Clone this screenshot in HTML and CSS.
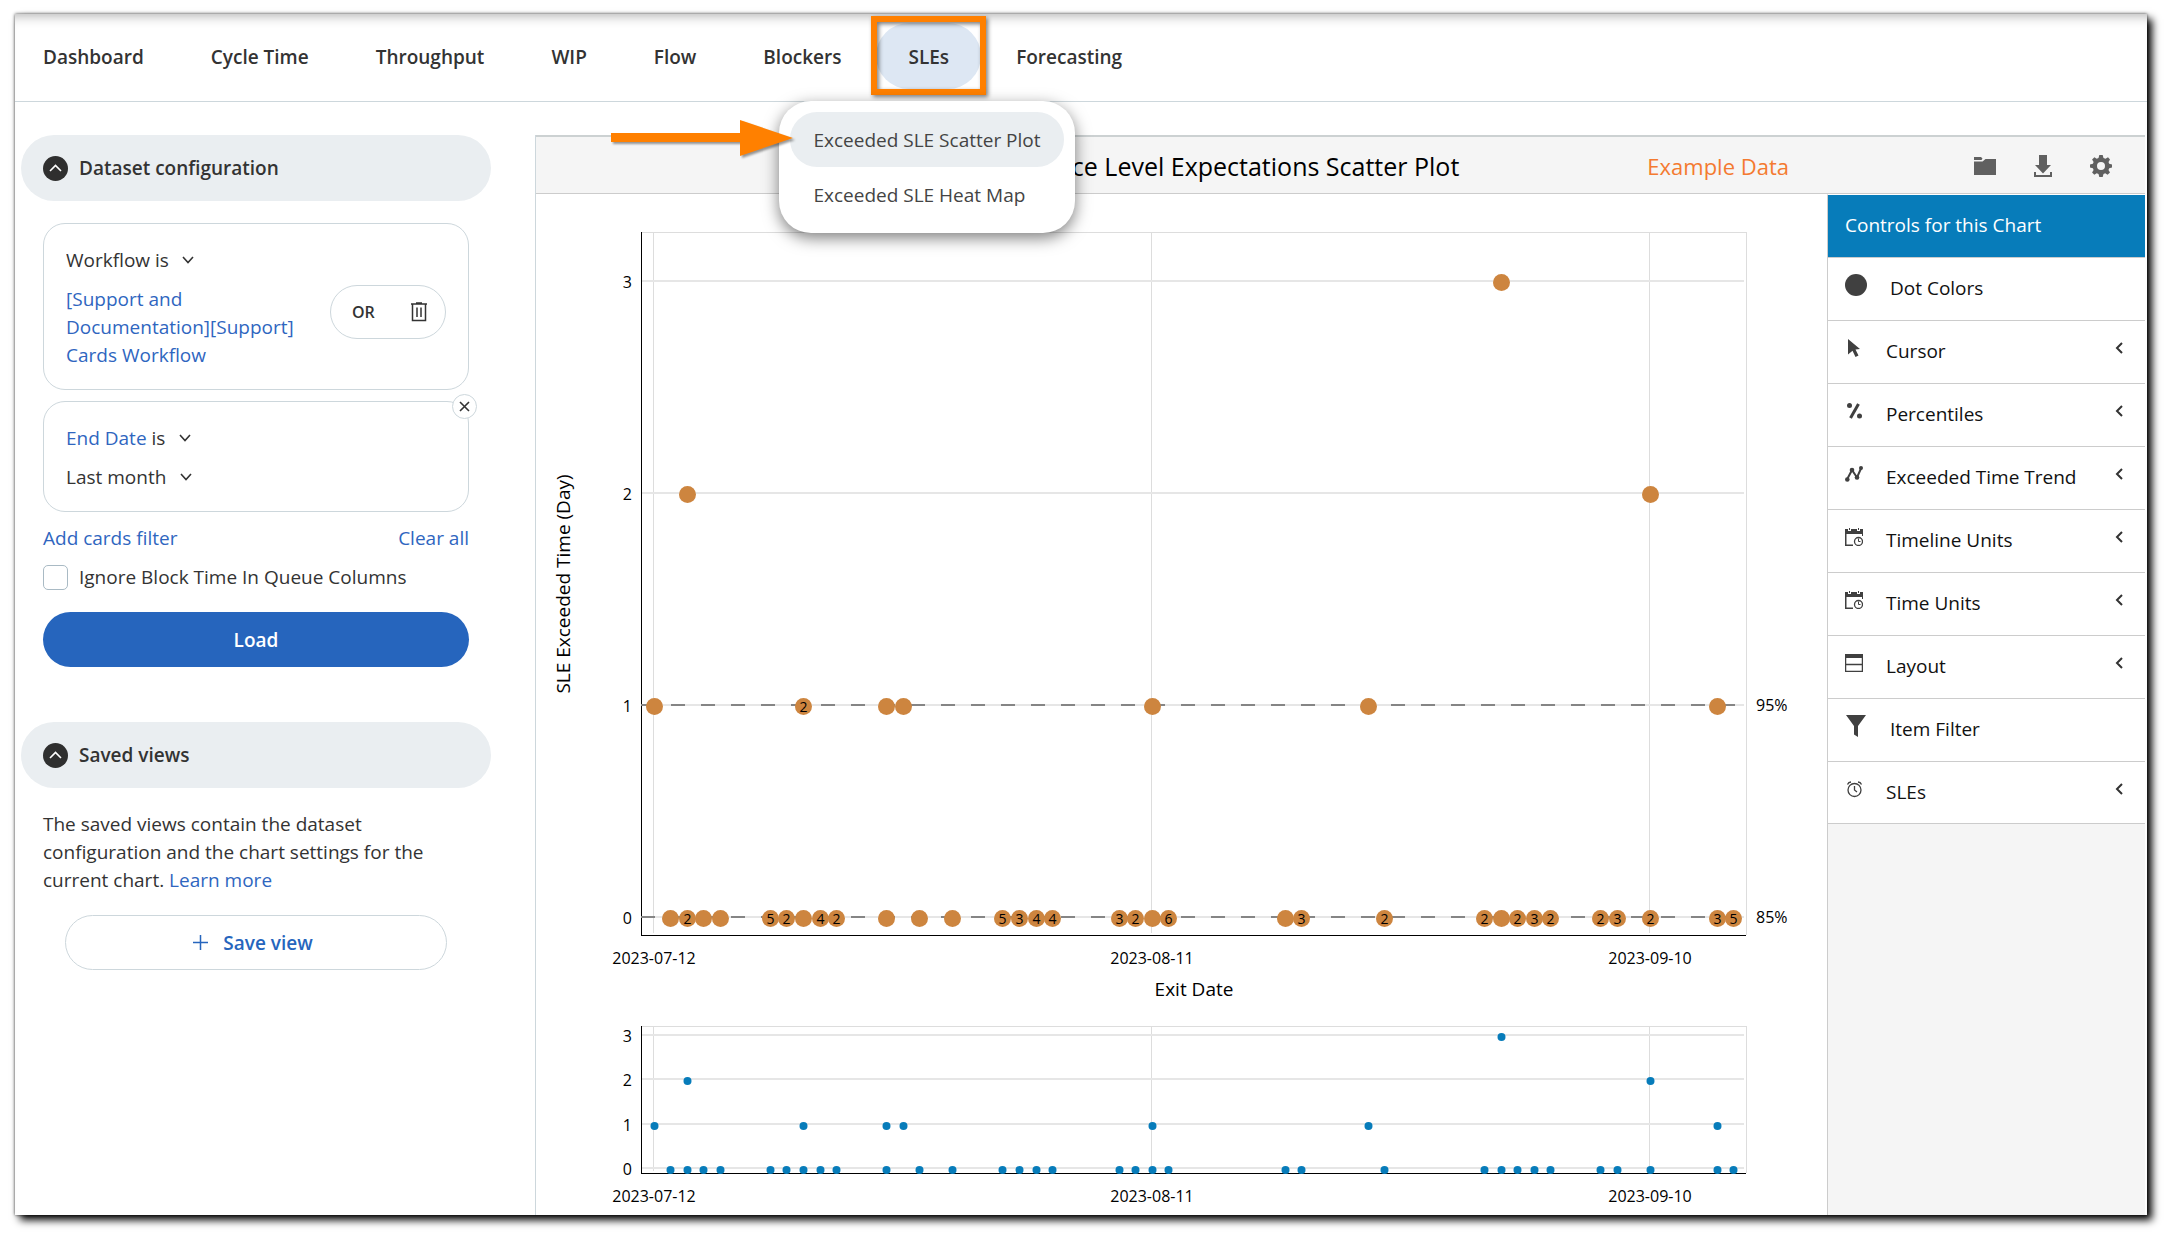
FILE: index.html
```
<!doctype html>
<html lang="en">
    <head>
        <meta charset="utf-8">
        <title>SLEs - Exceeded SLE Scatter Plot</title>
        <link rel="stylesheet" href="styles.css">
    </head>
    <body>
        <div class="frame">
            <nav class="topnav">
                <ul class="tabs">
                    <li><a class="tab" href="#">Dashboard</a></li>
                    <li><a class="tab" href="#">Cycle Time</a></li>
                    <li><a class="tab" href="#">Throughput</a></li>
                    <li><a class="tab" href="#">WIP</a></li>
                    <li><a class="tab" href="#">Flow</a></li>
                    <li><a class="tab" href="#">Blockers</a></li>
                    <li class="open">
                        <a class="tab active" href="#">SLEs</a>
                        <div class="highlight"></div>
                        <div class="menu">
                            <a class="menu-item current" href="#">Exceeded SLE Scatter Plot</a>
                            <a class="menu-item" href="#">Exceeded SLE Heat Map</a>
                        </div>
                        <svg class="arrow" width="182" height="36" viewBox="0 0 182 36"><path d="M0 13H129V0L182 18L129 36V22H0Z" fill="#ff8000"/></svg>
                    </li>
                    <li><a class="tab" href="#">Forecasting</a></li>
                </ul>
            </nav>

            <div class="page">
                <aside class="sidebar">
                    <button class="section-title" type="button">
                        <svg width="25" height="25" viewBox="0 0 25 25"><circle cx="12.5" cy="12.5" r="12.5" fill="#2f2f2f"/><path d="M7 15L12.500 9.500L18 15" fill="none" stroke="#fff" stroke-width="1.600"/></svg>
                        Dataset configuration
                    </button>
                    <div class="section">
                        <div class="card">
                            <div class="pick">
                                <select aria-label="Workflow condition"><option>Workflow is</option></select>
                                <svg class="chev" width="12" height="8" viewBox="0 0 12 8"><path d="M1 1L6 6.500L11 1"/></svg>
                            </div>
                            <div class="workflow">
                                <a href="#">[Support and Documentation][Support] Cards Workflow</a>
                                <div class="or-box">
                                    <button class="or" type="button">OR</button>
                                    <button class="trash" type="button" aria-label="Remove workflow">
                                        <svg width="16" height="20" viewBox="0 0 16 20" fill="none" stroke="#333" stroke-width="1.500"><path d="M0 2H16M5 1H11M1.500 2V18.500H14.500V2M6 5.500V15M10 5.500V15"/></svg>
                                    </button>
                                </div>
                            </div>
                        </div>
                        <div class="card">
                            <button class="close" type="button" aria-label="Remove end date">
                                <svg width="11" height="11" viewBox="0 0 11 11"><path d="M1 1L10 10M10 1L1 10" stroke="#333" stroke-width="1.600"/></svg>
                            </button>
                            <div class="pick">
                                <a href="#">End Date</a>
                                <select aria-label="End date condition"><option>is</option></select>
                                <svg class="chev" width="12" height="8" viewBox="0 0 12 8"><path d="M1 1L6 6.500L11 1"/></svg>
                            </div>
                            <div class="pick">
                                <select aria-label="Period"><option>Last month</option></select>
                                <svg class="chev" width="12" height="8" viewBox="0 0 12 8"><path d="M1 1L6 6.500L11 1"/></svg>
                            </div>
                        </div>
                        <div class="links">
                            <a href="#">Add cards filter</a>
                            <a href="#">Clear all</a>
                        </div>
                        <label class="check"><input type="checkbox">Ignore Block Time In Queue Columns</label>
                        <button class="load" type="button">Load</button>
                    </div>

                    <button class="section-title second" type="button">
                        <svg width="25" height="25" viewBox="0 0 25 25"><circle cx="12.5" cy="12.5" r="12.5" fill="#2f2f2f"/><path d="M7 15L12.500 9.500L18 15" fill="none" stroke="#fff" stroke-width="1.600"/></svg>
                        Saved views
                    </button>
                    <div class="section">
                        <p class="note">The saved views contain the dataset configuration and the chart settings for the current chart. <a href="#">Learn more</a></p>
                        <button class="save" type="button">
                            <svg width="15" height="15" viewBox="0 0 15 15"><path d="M7.500 0V15M0 7.500H15" stroke="#2665bd" stroke-width="1.500"/></svg>
                            Save view
                        </button>
                    </div>
                </aside>

                <main class="chart">
                    <header class="chart-head">
                        <h1>Service Level Expectations Scatter Plot</h1>
                        <span class="example">Example Data</span>
                        <div class="tools">
                            <button type="button" aria-label="Open">
                                <svg width="22" height="20" viewBox="0 0 22 20" fill="#606060"><path d="M0 1H7L8.500 2.500L7.500 4H0ZM0 5.500H8.500L11.500 3H22V19H0Z"/></svg>
                            </button>
                            <button type="button" aria-label="Download">
                                <svg width="18" height="22" viewBox="0 0 18 22" fill="#606060"><path d="M5 0H13V10H17L9 18.500L1 10H5ZM0 17H2V20H16V17H18V22H0Z"/></svg>
                            </button>
                            <button type="button" aria-label="Settings">
                                <svg width="22" height="22" viewBox="0 0 22 22"><path d="M9.300 0H12.700L13.500 3L15.500 3.800L18 2.300L20 4.600L18.500 7L19.200 8.800L22 9.400V12.600L19.200 13.300L18.500 15L20 17.500L17.600 19.800L15.200 18.300L13.500 19L12.700 22H9.300L8.500 19L6.700 18.300L4.300 19.800L2.100 17.500L3.600 15L2.900 13.300L0 12.600V9.400L2.900 8.800L3.600 7L2.100 4.600L4.400 2.300L6.700 3.800L8.500 3ZM11 7A4 4 0 1 0 11 15A4 4 0 1 0 11 7Z" fill="#606060" fill-rule="evenodd"/></svg>
                            </button>
                        </div>
                    </header>
                    <div class="chart-body">
                        <div class="plots">
                            <svg class="plot" id="main-plot" viewBox="0 0 1291 812"></svg>
                            <svg class="plot" id="mini-plot" viewBox="0 0 1291 202"></svg>
                        </div>
                        <div class="controls">
                            <h2>Controls for this Chart</h2>
                            <button class="control" type="button">
                                <svg width="22" height="22" viewBox="0 0 22 22"><circle cx="11" cy="11" r="11" fill="#404040"/></svg>
                                <span>Dot Colors</span>
                            </button>
                            <button class="control" type="button">
                                <svg width="18" height="18" viewBox="0 0 18 18"><path d="M3 0L15 10L10.500 10.500L13.500 16.500L10.500 18L7.500 11.800L3 15.500Z" fill="#404040"/></svg>
                                <span>Cursor</span>
                                <svg class="more" width="8" height="12" viewBox="0 0 8 12"><path d="M7 1L2 6L7 11"/></svg>
                            </button>
                            <button class="control" type="button">
                                <svg width="18" height="18" viewBox="0 0 18 18"><path d="M13.500 2L5.500 16" stroke="#404040" stroke-width="3"/><circle cx="4.500" cy="3.500" r="2.500" fill="#404040"/><circle cx="14.500" cy="14" r="2.500" fill="#404040"/></svg>
                                <span>Percentiles</span>
                                <svg class="more" width="8" height="12" viewBox="0 0 8 12"><path d="M7 1L2 6L7 11"/></svg>
                            </button>
                            <button class="control" type="button">
                                <svg width="18" height="18" viewBox="0 0 18 18" fill="#404040"><path d="M2 14.500L7 5L12 12.500L16 3.500" fill="none" stroke="#404040" stroke-width="2"/><circle cx="2.300" cy="14.500" r="2.300"/><circle cx="7" cy="5" r="2.300"/><circle cx="12" cy="12.500" r="2.300"/><circle cx="16" cy="3" r="2"/></svg>
                                <span>Exceeded Time Trend</span>
                                <svg class="more" width="8" height="12" viewBox="0 0 8 12"><path d="M7 1L2 6L7 11"/></svg>
                            </button>
                            <button class="control" type="button">
                                <svg width="18" height="18" viewBox="0 0 18 18"><path d="M0 1H3V3H6V1H12V3H15V1H18V8H17V6H1.500V16.500H8V18H0Z" fill="#404040"/><path d="M4.500 0V2M13.500 0V2M13.500 10.500V13.500H15.500" stroke="#404040" fill="none"/><circle cx="13.500" cy="13.500" r="4" fill="none" stroke="#404040" stroke-width="1.300"/></svg>
                                <span>Timeline Units</span>
                                <svg class="more" width="8" height="12" viewBox="0 0 8 12"><path d="M7 1L2 6L7 11"/></svg>
                            </button>
                            <button class="control" type="button">
                                <svg width="18" height="18" viewBox="0 0 18 18"><path d="M0 1H3V3H6V1H12V3H15V1H18V8H17V6H1.500V16.500H8V18H0Z" fill="#404040"/><path d="M4.500 0V2M13.500 0V2M13.500 10.500V13.500H15.500" stroke="#404040" fill="none"/><circle cx="13.500" cy="13.500" r="4" fill="none" stroke="#404040" stroke-width="1.300"/></svg>
                                <span>Time Units</span>
                                <svg class="more" width="8" height="12" viewBox="0 0 8 12"><path d="M7 1L2 6L7 11"/></svg>
                            </button>
                            <button class="control" type="button">
                                <svg width="18" height="18" viewBox="0 0 18 18"><path d="M0 0H18V4H0Z" fill="#404040"/><path d="M.600 3V17.400H17.400V3M0 10.500H18" fill="none" stroke="#404040" stroke-width="1.300"/></svg>
                                <span>Layout</span>
                                <svg class="more" width="8" height="12" viewBox="0 0 8 12"><path d="M7 1L2 6L7 11"/></svg>
                            </button>
                            <button class="control" type="button">
                                <svg width="22" height="22" viewBox="0 0 22 22"><path d="M1 0H21L13 11V22L9 19.500V11Z" fill="#404040"/></svg>
                                <span>Item Filter</span>
                            </button>
                            <button class="control" type="button">
                                <svg width="18" height="18" viewBox="0 0 18 18" fill="none" stroke="#404040" stroke-width="1.300"><circle cx="9.500" cy="10" r="6.500"/><path d="M9.500 6V10L12 12M2.500 4.500A4 4 0 0 1 6 2M13 2A4 4 0 0 1 16.500 4.500"/></svg>
                                <span>SLEs</span>
                                <svg class="more" width="8" height="12" viewBox="0 0 8 12"><path d="M7 1L2 6L7 11"/></svg>
                            </button>
                        </div>
                    </div>
                </main>
            </div>
        </div>
        <script src="chart.js"></script>
    </body>
</html>
```
FILE: styles.css
```
* {
    box-sizing: border-box;
}
body {
    margin: 0;
    padding: 14px 27px 27px 15px;
    min-height: 100vh;
    display: flex;
    background: #fff;
    color: #333;
    font: 19px/28px "Open Sans", sans-serif;
}
a {
    color: #2f66bf;
    text-decoration: none;
}
button, select {
    margin: 0;
    padding: 0;
    border: 0;
    background: none;
    color: inherit;
    font: inherit;
}
svg {
    display: block;
    flex: none;
}
.frame {
    flex: 1;
    display: flex;
    flex-direction: column;
    background: #fff;
    box-shadow: inset 0 12px 12px -10px rgba(0, 0, 0, .3), 0 0 3px rgba(0, 0, 0, .7), 5px 5px 8px #000;
}

/* top navigation */
.topnav {
    padding: 9px 0 12px;
    border-bottom: 1px solid #cdd7dc;
}
.tabs {
    display: flex;
    gap: 3px;
    margin: 0 0 0 -4px;
    padding: 0;
    list-style: none;
}
.tab {
    display: block;
    padding: 20px 32px 18px;
    border-radius: 33px;
    color: #333;
    font-weight: 600;
}
.tab.active {
    background: #dde7f3;
}
.open {
    position: relative;
}
.highlight {
    position: absolute;
    top: -7px;
    left: -5px;
    right: -5px;
    height: 79px;
    border: 6px solid #ff8000;
    filter: drop-shadow(2px 2px 2px rgba(0, 0, 0, .5));
}
.menu {
    position: absolute;
    z-index: 1;
    top: 78px;
    left: -97px;
    padding: 11px;
    border-radius: 32px;
    background: #fff;
    box-shadow: 0 5px 16px rgba(0, 0, 0, .5);
    white-space: nowrap;
}
.menu-item {
    display: block;
    padding: 14px 23px 13px;
    border-radius: 27px;
    color: #444;
}
.menu-item.current {
    background: #eaeef1;
}
.arrow {
    position: absolute;
    z-index: 2;
    top: 97px;
    left: -265px;
    filter: drop-shadow(2px 2px 1px rgba(0, 0, 0, .4));
}

/* left column */
.page {
    flex: 1;
    display: grid;
    grid-template-columns: 520px 1fr;
    padding: 33px 2px 0 0;
}
.sidebar {
    padding: 0 44px 0 6px;
}
.section-title {
    display: flex;
    align-items: center;
    gap: 11px;
    width: 100%;
    height: 66px;
    padding: 0 22px;
    border-radius: 33px;
    background: #eaeef1;
    font-weight: 600;
}
.second {
    margin-top: 55px;
}
.section {
    padding: 22px 22px 0;
}
.card {
    position: relative;
    display: flex;
    flex-direction: column;
    gap: 11px;
    padding: 22px 22px 20px;
    border: 1px solid #cdd7dc;
    border-radius: 22px;
}
.card + .card {
    margin-top: 11px;
}
.pick {
    display: flex;
    align-items: center;
    gap: 5px;
}
.pick select {
    appearance: none;
    line-height: 28px;
}
.chev {
    margin-left: 8px;
    fill: none;
    stroke: #333;
    stroke-width: 1.6;
    pointer-events: none;
}
.workflow {
    display: flex;
    align-items: flex-start;
    justify-content: space-between;
}
.workflow a {
    max-width: 250px;
}
.or-box {
    display: flex;
    align-items: center;
    justify-content: space-between;
    width: 116px;
    height: 54px;
    padding: 0 18px 0 21px;
    border: 1px solid #cdd7dc;
    border-radius: 27px;
}
.or {
    font-size: 16px;
    font-weight: 600;
}
.close {
    position: absolute;
    top: -8px;
    right: -9px;
    display: grid;
    place-items: center;
    width: 25px;
    height: 25px;
    border: 1px solid #cdd7dc;
    border-radius: 50%;
    background: #fff;
}
.links {
    display: flex;
    justify-content: space-between;
    margin-top: 12px;
}
.check {
    display: flex;
    align-items: center;
    gap: 11px;
    margin: 11px 0 21px;
}
.check input {
    appearance: none;
    width: 25px;
    height: 25px;
    margin: 0;
    border: 1px solid #a9bac4;
    border-radius: 5px;
    background: #fff;
}
.load {
    width: 100%;
    height: 55px;
    border-radius: 28px;
    background: #2665bd;
    color: #fff;
    font-weight: 600;
}
.note {
    margin: 0 0 21px;
}
.save {
    display: flex;
    align-items: center;
    justify-content: center;
    gap: 15px;
    width: 382px;
    height: 55px;
    margin: 0 auto;
    padding-right: 6px;
    border: 1px solid #cdd7dc;
    border-radius: 28px;
    color: #2665bd;
    font-weight: 600;
}

/* chart */
.chart {
    display: flex;
    flex-direction: column;
    border-left: 1px solid #cdd7dc;
}
.chart-head {
    display: flex;
    align-items: center;
    justify-content: flex-end;
    height: 59px;
    padding: 2px 33px 0 0;
    border-top: 2px solid #ccd1d2;
    border-bottom: 1px solid #ccc;
    background: #f5f5f5;
}
.chart-head h1 {
    margin: 0 188px 0 0;
    color: #000;
    font-size: 25px;
    font-weight: 400;
}
.example {
    color: #f47a30;
    font-size: 22px;
}
.tools {
    display: flex;
    align-items: center;
    gap: 38px;
    margin-left: 185px;
}
.chart-body {
    flex: 1;
    display: grid;
    grid-template-columns: 1fr 318px;
}
.plots {
    padding-top: 1px;
}
.plot {
    width: 100%;
    font-size: 16px;
}
.axis-title {
    font-size: 19px;
}
.count {
    font-size: 14px;
}
.controls {
    border-left: 1px solid #ccc;
    border-top: 1px solid #fff;
    background: #f5f5f5;
    color: #111;
}
.controls h2 {
    margin: 0;
    padding: 16px 17px 18px;
    background: #077cba;
    color: #fff;
    font-size: 19px;
    font-weight: 400;
}
.control {
    display: flex;
    align-items: center;
    gap: 23px;
    width: 100%;
    height: 63px;
    padding: 0 22px 0 17px;
    border-top: 1px solid #ccc;
    background: #fff;
}
.control:last-child {
    border-bottom: 1px solid #ccc;
}
.control span {
    margin-bottom: 2px;
}
.control svg {
    margin-bottom: 8px;
}
.control .more {
    margin-left: auto;
    fill: none;
    stroke: #333;
    stroke-width: 2;
}
```
FILE: chart.js
```
// [day, exceeded time, number of cards]
var cards = [
    [0, 1], [1, 0], [2, 0, 2], [2, 2], [3, 0], [4, 0], [7, 0, 5], [8, 0, 2],
    [9, 0], [9, 1, 2], [10, 0, 4], [11, 0, 2], [14, 0], [14, 1], [15, 1],
    [16, 0], [18, 0], [21, 0, 5], [22, 0, 3], [23, 0, 4], [24, 0, 4],
    [28, 0, 3], [29, 0, 2], [30, 0], [30, 1], [31, 0, 6], [38, 0], [39, 0, 3],
    [43, 1], [44, 0, 2], [50, 0, 2], [51, 0], [51, 3], [52, 0, 2], [53, 0, 3],
    [54, 0, 2], [57, 0, 2], [58, 0, 3], [60, 0, 2], [60, 2], [64, 0, 3],
    [64, 1], [65, 0, 5]
];
var dates = [[0, "2023-07-12"], [30, "2023-08-11"], [60, "2023-09-10"]];
var left = 105, right = 1210;

function add(svg, tag, attrs, text) {
    var el = document.createElementNS("http://www.w3.org/2000/svg", tag);
    for (var name in attrs)
        el.setAttribute(name, attrs[name]);
    if (text !== undefined)
        el.textContent = text;
    svg.appendChild(el);
}

function line(svg, x1, y1, x2, y2, color, width, dash) {
    add(svg, "line", { x1: x1, y1: y1, x2: x2, y2: y2, stroke: color, "stroke-width": width, "stroke-dasharray": dash || "none" });
}

function dayX(day) {
    return Math.round(116.5 + day * 16.61);
}

function drawAxes(svg, o) {
    line(svg, left, o.top + .5, right, o.top + .5, "#ddd", 1);
    line(svg, right + .5, o.top, right + .5, o.bottom, "#ddd", 1);
    dates.forEach(function (d) {
        line(svg, dayX(d[0]) + .5, o.top, dayX(d[0]) + .5, o.bottom - 2, "#ddd", 1);
        add(svg, "text", { x: dayX(d[0]) + 1, y: o.bottom + 29, "text-anchor": "middle" }, d[1]);
    });
    for (var v = 0; v < 4; v++) {
        var y = Math.round(o.zero - v * o.step);
        line(svg, left, y, right - 2, y, "#e6e6e6", 2);
        add(svg, "text", { x: 96, y: y + 7, "text-anchor": "end" }, v);
    }
    line(svg, left + .5, o.top, left + .5, o.bottom, "#000", 1);
    line(svg, left, o.bottom + .5, right, o.bottom + .5, "#000", 1);
}

function drawDots(svg, o) {
    cards.forEach(function (c) {
        var x = dayX(c[0]) + 1.5, y = Math.round(o.zero - c[1] * o.step) + o.shift;
        add(svg, "circle", { cx: x, cy: y, r: o.r, fill: o.color });
        if (o.counts && c[2])
            add(svg, "text", { x: x, y: y + 5, "text-anchor": "middle", "class": "count" }, c[2]);
    });
}

var mainPlot = document.getElementById("main-plot");
var main = { top: 37, bottom: 740, zero: 722, step: 212, r: 8.5, shift: 1.5, color: "#cd853f", counts: true };
drawAxes(mainPlot, main);
line(mainPlot, left, 510, right - 2, 510, "#858585", 2, "14 16");
line(mainPlot, left, 722, right - 2, 722, "#858585", 2, "14 16");
drawDots(mainPlot, main);
add(mainPlot, "text", { x: 1220, y: 516 }, "95%");
add(mainPlot, "text", { x: 1220, y: 728 }, "85%");
add(mainPlot, "text", { x: 658, y: 801, "text-anchor": "middle", "class": "axis-title" }, "Exit Date");
add(mainPlot, "text", { x: 34, y: 389, "text-anchor": "middle", transform: "rotate(-90 34 389)", "class": "axis-title" }, "SLE Exceeded Time (Day)");

var miniPlot = document.getElementById("mini-plot");
var mini = { top: 19, bottom: 166, zero: 161, step: 44.4, r: 4, shift: 2, color: "#077cba" };
drawAxes(miniPlot, mini);
drawDots(miniPlot, mini);
```
